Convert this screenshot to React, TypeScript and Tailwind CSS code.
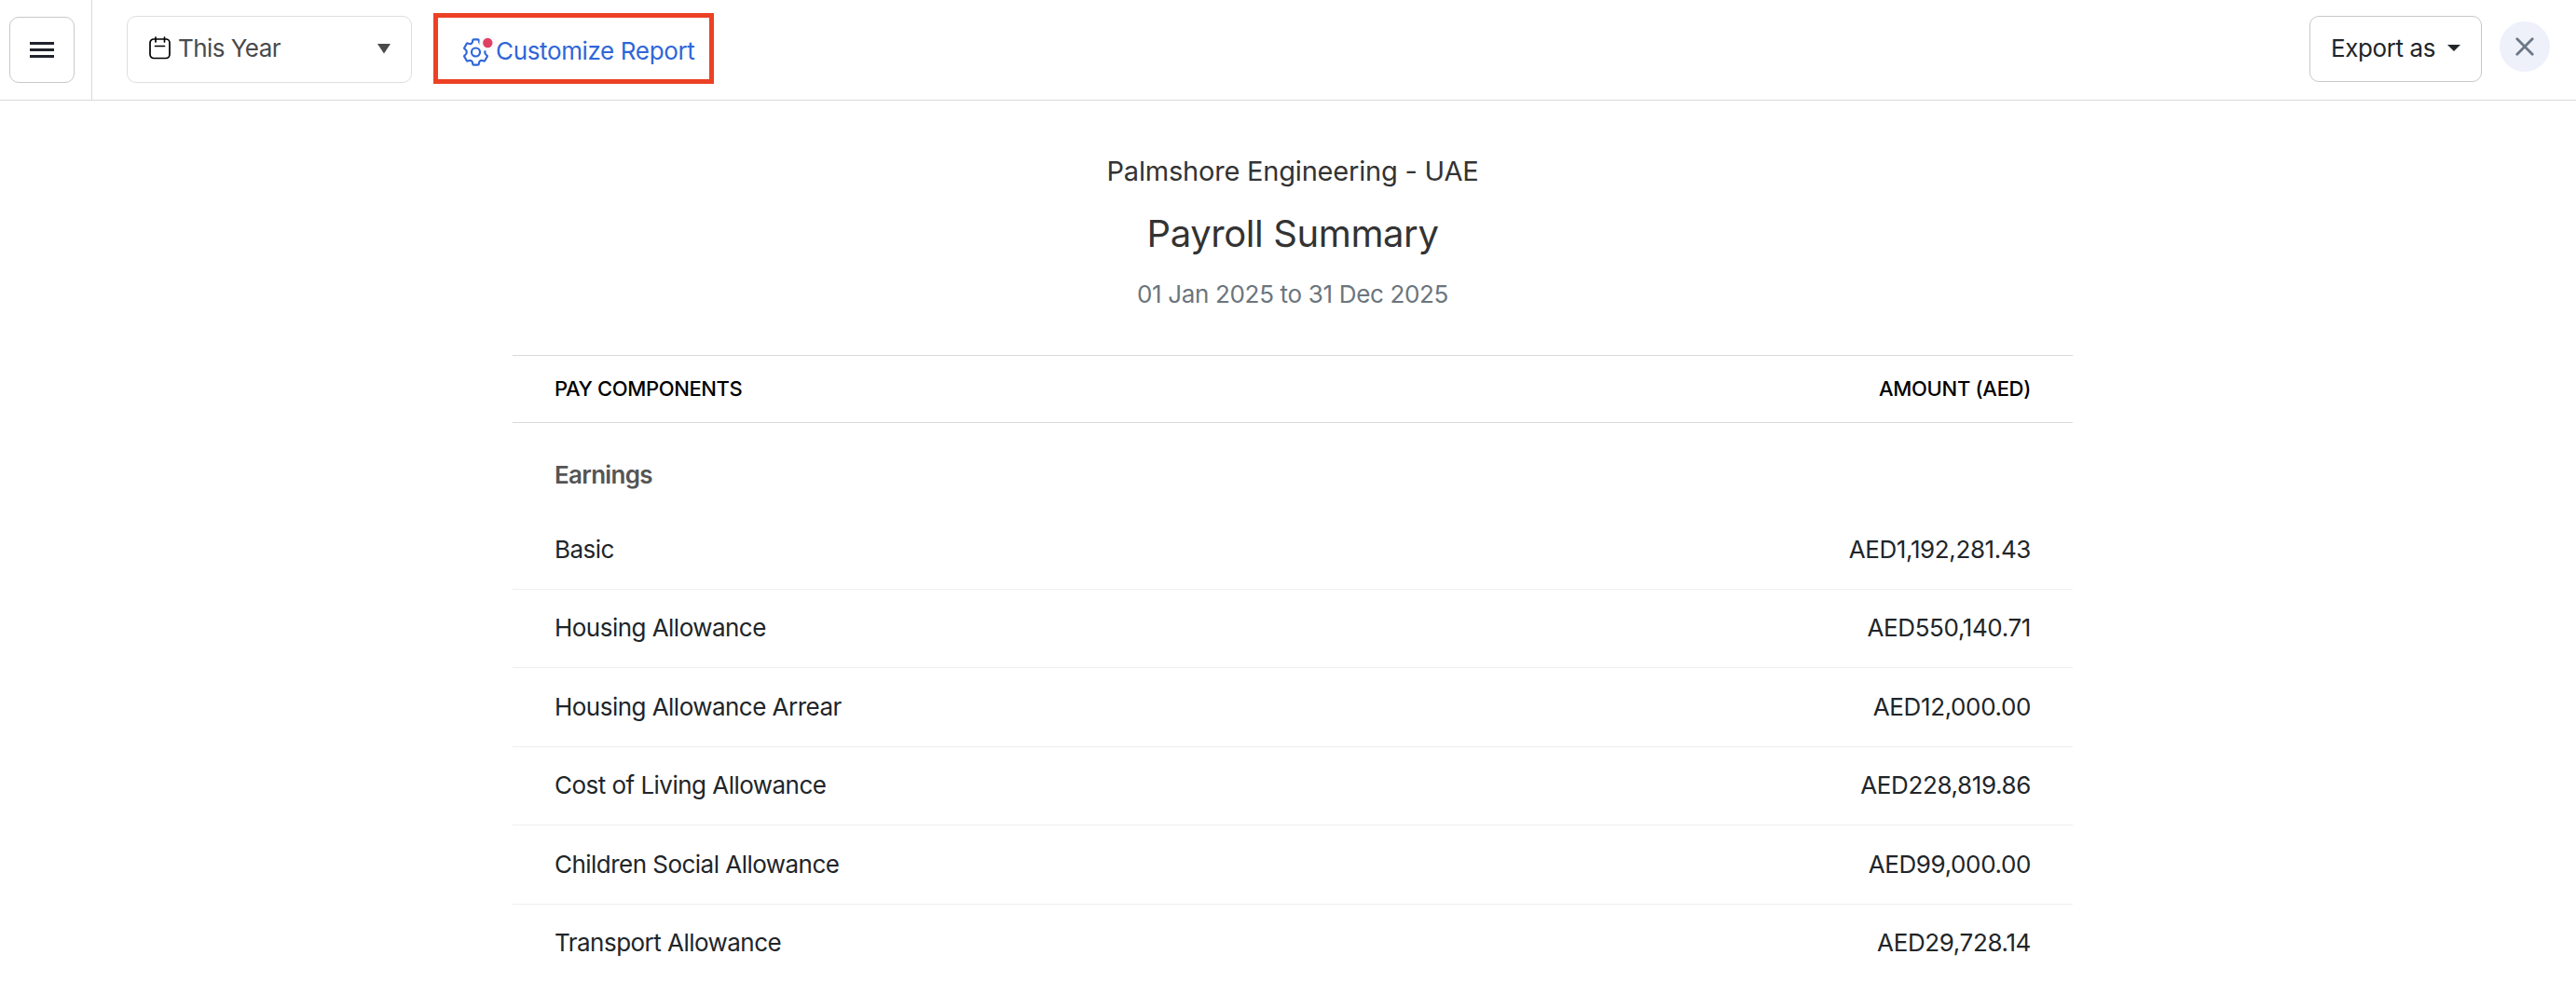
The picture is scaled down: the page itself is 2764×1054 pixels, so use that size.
const rows: [string, string][] = [
  ["Basic", "AED1,192,281.43"],
  ["Housing Allowance", "AED550,140.71"],
  ["Housing Allowance Arrear", "AED12,000.00"],
  ["Cost of Living Allowance", "AED228,819.86"],
  ["Children Social Allowance", "AED99,000.00"],
  ["Transport Allowance", "AED29,728.14"],
];

function CalendarIcon() {
  return (
    <svg width="24" height="26" viewBox="0 0 24 26" fill="none" stroke="#000" className="shrink-0">
      <rect x="1" y="3" width="21" height="20.5" rx="4" strokeWidth="1.7" />
      <path d="M7 1v5M16.500 1v5M6.500 10.500h10" strokeWidth="1.700" strokeLinecap="round" />
    </svg>
  );
}

function GearIcon() {
  return (
    <svg width="37" height="36" viewBox="0 0 37 36" fill="none" className="shrink-0">
      <path
        d="M11.200 6.600Q11.200 5.400 12.400 5.400H16.600Q17.800 5.400 17.800 6.600C17.800 9.700 20.200 11 22.700 9.600Q23.700 9 24.300 10L26.600 14Q27.200 15 26.200 15.600C23.600 17.200 23.600 20.800 26.200 22.400Q27.200 23 26.600 24L24.300 28Q23.700 29 22.700 28.400C20.200 27 17.800 28.300 17.800 31.400Q17.800 32.600 16.600 32.600H12.400Q11.200 32.600 11.200 31.400C11.200 28.300 8.800 27 6.300 28.400Q5.300 29 4.700 28L2.400 24Q1.800 23 2.800 22.400C5.400 20.800 5.400 17.200 2.800 15.600Q1.800 15 2.400 14L4.700 10Q5.300 9 6.300 9.600C8.800 11 11.200 9.700 11.200 6.600Z"
        stroke="#2f66d8"
        strokeWidth="2.2"
        strokeLinejoin="round"
      />
      <circle cx="14.500" cy="19" r="4.500" stroke="#2f66d8" strokeWidth="2.2" />
      <circle cx="27.300" cy="9" r="9" fill="#f7f9fe" />
      <circle cx="27.300" cy="9" r="5.200" fill="#df4164" />
    </svg>
  );
}

export default function App() {
  return (
    <div className="h-[1054px] w-full overflow-hidden bg-white font-[Inter,sans-serif] text-[26px] leading-[32px] text-[#212529]">
      <header className="flex h-[108px] items-start border-b border-[#d9d9d9]">
        <div className="h-full w-[99px] border-r border-[#d9d9d9] pt-[18px] pl-[10px]">
          <button className="flex h-[71px] w-[70px] items-center justify-center rounded-[10px] border border-[#c8c8c8]">
            <svg width="26" height="18" viewBox="0 0 26 18" fill="#21232c">
              <path d="M0 0h26v3H0zM0 7h26v3H0zM0 14h26v3H0z" />
            </svg>
          </button>
        </div>
        <button className="mt-[17px] ml-[37px] flex h-[72px] w-[306px] items-center rounded-[10px] border border-[#dedede] pr-[22px] pb-[2px] pl-[23px] text-[#4a4a4a]">
          <CalendarIcon />
          <span className="ml-[7px] tracking-[-0.55px]">This Year</span>
          <svg width="14" height="11" viewBox="0 0 14 11" className="ml-auto" fill="#4a4a4a">
            <path d="M0 0h14L7 10.500z" />
          </svg>
        </button>
        <button className="mt-[14px] ml-[23px] flex h-[76px] w-[301px] items-center border-[5px] border-[#ec4125] pt-[6px] pl-[26px] text-[#2f66d8]">
          <GearIcon />
          <span className="-ml-px tracking-[-0.36px] whitespace-nowrap">Customize Report</span>
        </button>
        <button className="mt-[17px] ml-auto flex h-[71px] w-[185px] items-center rounded-[10px] border border-[#c8c8c8] pb-[1px] pl-[22px]">
          <span className="tracking-[-0.4px] whitespace-nowrap">Export as</span>
          <svg width="14" height="8" viewBox="0 0 14 8" className="ml-[13px]" fill="#212529">
            <path d="M0 0h14L7 7z" />
          </svg>
        </button>
        <button className="mt-[23px] mr-[28px] ml-[19px] flex h-[54px] w-[54px] items-center justify-center rounded-full bg-[#eef1fa]">
          <svg width="20" height="20" viewBox="0 0 20 20" stroke="#6c7785" strokeWidth="2.8" strokeLinecap="round">
            <path d="M1.800 1.800l16.400 16.400M18.200 1.800L1.800 18.200" />
          </svg>
        </button>
      </header>

      <main className="mx-auto w-[1674px] translate-x-[5px]">
        <div className="flex flex-col items-center pt-[58px] text-[#333]">
          <p className="text-[29px] leading-[36px] tracking-[-0.2px]">Palmshore Engineering - UAE</p>
          <h1 className="mt-[24px] text-[40px] leading-[50px] tracking-[-0.4px]">Payroll Summary</h1>
          <p className="mt-[24px] tracking-[-0.33px] text-[#6c757d]">01 Jan 2025 to 31 Dec 2025</p>
        </div>

        <div className="mt-[49px] flex h-[73px] items-center justify-between border-y border-[#d9d9d9] px-[45px] pb-px text-[22px] font-medium text-black">
          <span className="tracking-[-0.38px]">PAY COMPONENTS</span>
          <span className="tracking-[-0.3px]">AMOUNT (AED)</span>
        </div>
        <h2 className="px-[45px] pt-[40px] pb-[22px] font-semibold tracking-[-0.7px] text-[#555]">Earnings</h2>
        {rows.map(([name, amount]) => (
          <div key={name} className="flex h-[84.500px] items-center justify-between border-b border-[#eee] px-[45px]">
            <span className="tracking-[-0.53px]">{name}</span>
            <span className="tracking-[-0.38px]">{amount}</span>
          </div>
        ))}
      </main>
    </div>
  );
}
